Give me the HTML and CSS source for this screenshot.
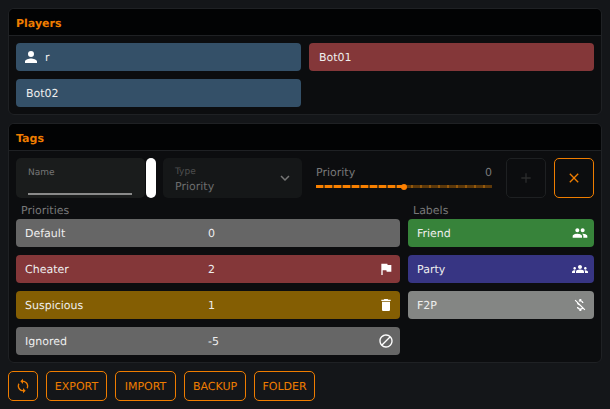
FILE: index.html
```html
<!DOCTYPE html>
<html lang="en">
<head>
<meta charset="utf-8">
<title>Players and Tags</title>
<link rel="stylesheet" href="styles.css">
</head>
<body>
<section class="card players">
  <h2 class="card-title">Players</h2>
  <div class="card-body player-grid">
    <div class="row blue"><svg class="user-icon" viewBox="0 0 24 24"><path d="M12 12a4 4 0 1 0 0-8 4 4 0 0 0 0 8zm0 2c-2.700 0-8 1.340-8 4v2h16v-2c0-2.660-5.300-4-8-4z"/></svg><span class="name-shift">r</span></div>
    <div class="row red">Bot01</div>
    <div class="row blue">Bot02</div>
  </div>
</section>
<section class="card tags">
  <h2 class="card-title">Tags</h2>
  <div class="card-body">
    <div class="controls">
      <div class="name-wrap">
        <div class="name-field"><span class="name-label">Name</span><span class="name-line"></span></div>
        <div class="scroll-pill"></div>
      </div>
      <div class="type-field">
        <div class="type-text"><span class="type-label">Type</span><span class="type-value">Priority</span></div>
        <svg class="chevron" viewBox="0 0 24 24"><path d="M7.410 8.590 12 13.170l4.590-4.580L18 10l-6 6-6-6z"/></svg>
      </div>
      <div class="slider">
        <div class="slider-head"><span>Priority</span><span>0</span></div>
        <div class="track">
          <div class="track-on"></div>
          <div class="track-off"></div>
          <div class="thumb"></div>
        </div>
      </div>
      <div class="square disabled"><svg viewBox="0 0 24 24"><path d="M19 13h-6v6h-2v-6H5v-2h6V5h2v6h6z"/></svg></div>
      <div class="square active"><svg viewBox="0 0 24 24"><path d="M19 6.410 17.590 5 12 10.590 6.410 5 5 6.410 10.590 12 5 17.590 6.410 19 12 13.410 17.590 19 19 17.590 13.410 12z"/></svg></div>
    </div>
    <div class="lists">
      <div class="list">
        <div class="list-title">Priorities</div>
        <div class="row prio gray"><span>Default</span><span>0</span><span></span></div>
        <div class="row prio red"><span>Cheater</span><span>2</span><svg class="icon" viewBox="0 0 24 24"><path d="M14.400 6 14 4H5v17h2v-7h5.600l.4 2h7V6z"/></svg></div>
        <div class="row prio amber"><span>Suspicious</span><span>1</span><svg class="icon" viewBox="0 0 24 24"><path d="M6 19c0 1.100.9 2 2 2h8c1.100 0 2-.9 2-2V7H6v12zM19 4h-3.500l-1-1h-5l-1 1H5v2h14V4z"/></svg></div>
        <div class="row prio gray"><span>Ignored</span><span>-5</span><svg class="icon" viewBox="0 0 24 24"><path d="M12 2C6.480 2 2 6.480 2 12s4.480 10 10 10 10-4.480 10-10S17.520 2 12 2zM4 12c0-4.420 3.580-8 8-8 1.850 0 3.550.63 4.900 1.690L5.690 16.900A7.902 7.902 0 0 1 4 12zm8 8c-1.850 0-3.550-.63-4.900-1.690L18.310 7.100A7.902 7.902 0 0 1 20 12c0 4.420-3.580 8-8 8z"/></svg></div>
      </div>
      <div class="list">
        <div class="list-title">Labels</div>
        <div class="row label green"><span>Friend</span><svg class="icon" viewBox="0 0 24 24"><path d="M16 11c1.660 0 2.990-1.340 2.990-3S17.660 5 16 5s-3 1.340-3 3 1.340 3 3 3zm-8 0c1.660 0 2.990-1.340 2.990-3S9.660 5 8 5 5 6.340 5 8s1.340 3 3 3zm0 2c-2.330 0-7 1.170-7 3.500V19h14v-2.500C15 14.170 10.330 13 8 13zm8 0c-.29 0-.62.020-.97.050 1.160.84 1.970 1.970 1.970 3.450V19h6v-2.500c0-2.330-4.670-3.500-7-3.500z"/></svg></div>
        <div class="row label indigo"><span>Party</span><svg class="icon" viewBox="0 0 24 24"><path d="M12 12.750c1.630 0 3.070.39 4.240.9 1.080.48 1.760 1.560 1.760 2.730V18H6v-1.610c0-1.180.68-2.260 1.760-2.730 1.170-.52 2.610-.91 4.240-.91zM4 13c1.100 0 2-.9 2-2s-.9-2-2-2-2 .9-2 2 .9 2 2 2zm1.130 1.100C4.760 14.040 4.390 14 4 14c-.99 0-1.930.21-2.780.58A2.010 2.010 0 0 0 0 16.430V18h4.500v-1.610c0-.83.23-1.610.63-2.290zM20 13c1.100 0 2-.9 2-2s-.9-2-2-2-2 .9-2 2 .9 2 2 2zm4 3.430c0-.81-.48-1.530-1.220-1.850A6.950 6.950 0 0 0 20 14c-.39 0-.76.040-1.130.1.400.68.630 1.460.63 2.290V18H24v-1.570zM12 6c1.660 0 3 1.340 3 3s-1.340 3-3 3-3-1.340-3-3 1.340-3 3-3z"/></svg></div>
        <div class="row label silver"><span>F2P</span><svg class="icon" viewBox="0 0 24 24"><path d="M12.500 6.900c1.780 0 2.440.85 2.500 2.100h2.210c-.07-1.720-1.120-3.300-3.210-3.810V3h-3v2.160c-.53.120-1.030.3-1.480.54l1.470 1.470c.41-.17.910-.27 1.510-.27zM5.330 4.060 4.060 5.330 7.500 8.770c0 2.080 1.560 3.210 3.910 3.910l3.510 3.510c-.34.480-1.050.91-2.420.91-2.060 0-2.870-.92-2.980-2.100h-2.200c.12 2.190 1.760 3.420 3.680 3.830V21h3v-2.150c.96-.18 1.820-.55 2.450-1.120l2.220 2.220 1.270-1.270L5.330 4.060z"/></svg></div>
      </div>
    </div>
  </div>
</section>
<nav class="actions">
  <button class="action icon-action"><svg viewBox="0 0 24 24"><path d="M12 4V1L8 5l4 4V6c3.310 0 6 2.690 6 6 0 1.010-.25 1.970-.7 2.800l1.460 1.460C19.540 15.030 20 13.570 20 12c0-4.420-3.580-8-8-8zm0 14c-3.310 0-6-2.690-6-6 0-1.010.25-1.970.7-2.800L5.240 7.740C4.460 8.970 4 10.430 4 12c0 4.420 3.580 8 8 8v3l4-4-4-4v3z"/></svg></button>
  <button class="action btn-export">EXPORT</button>
  <button class="action btn-import">IMPORT</button>
  <button class="action btn-backup">BACKUP</button>
  <button class="action btn-folder">FOLDER</button>
</nav>
</body>
</html>
```
FILE: styles.css
```css
* { box-sizing: border-box; }
html, body { margin: 0; height: 100%; }
body {
  padding: 8px;
  background: #141619;
  font-family: "DejaVu Sans", sans-serif;
  font-size: 11px;
  color: #eee;
  overflow: hidden;
  text-rendering: geometricPrecision;
}
.card {
  background: #0c0d0f;
  border: 1px solid #1f2124;
  border-radius: 6px;
  overflow: hidden;
}
.players { height: 107px; }
.tags { height: 240px; margin-top: 8px; }
.card-title {
  margin: 0;
  height: 27px;
  padding: 0 7px;
  background: #020304;
  border-bottom: 1px solid #1f2124;
  color: #ef7d00;
  font-size: 11px;
  font-weight: 700;
  line-height: 30px;
}
.card-body { padding: 7px 7px; }
.player-grid { display: grid; grid-template-columns: 1fr 1fr; gap: 8px; }
.row {
  display: flex;
  align-items: center;
  height: 28px;
  padding: 0 10px;
  border-radius: 4px;
  color: #eee;
}
.blue { background: #345068; }
.red { background: #843739; }
.gray { background: #666; }
.amber { background: #845e03; }
.green { background: #37833a; }
.indigo { background: #373583; }
.silver { background: #848684; }
.user-icon { width: 18px; height: 18px; fill: #fff; margin-left: -4px; margin-right: 5px; }
.name-shift { display: block; }
.controls { display: flex; height: 40px; }
.name-wrap { display: flex; width: 140px; gap: 1px; }
.name-field {
  flex: 1;
  position: relative;
  background: #1a1c1c;
  border-radius: 5px;
  padding: 10px 12px;
}
.name-label { display: block; font-size: 9px; color: #777; line-height: 11px; }
.name-line { position: absolute; left: 12px; right: 13px; bottom: 3px; height: 2px; background: #8a8a8a; }
.scroll-pill { width: 10px; background: #fff; border-radius: 5px; }
.type-field {
  display: flex;
  align-items: center;
  width: 139px;
  margin-left: 7px;
  padding: 0 8px 0 12px;
  background: #151718;
  border-radius: 5px;
}
.type-text { flex: 1; display: flex; flex-direction: column; padding-top: 3px; }
.type-label { font-size: 9px; color: #4e4f4f; line-height: 12px; }
.type-value { color: #6c6d6d; line-height: 15px; margin-top: 1px; }
.chevron { width: 18px; height: 18px; fill: #767676; }
.slider { width: 176px; margin-left: 14px; margin-right: 14px; color: #787878; }
.slider-head { display: flex; justify-content: space-between; padding-top: 8px; line-height: 14px; }
.track { position: relative; height: 3px; margin-top: 5px; }
.track-on {
  position: absolute; left: 0; top: 0; height: 3px; width: 50%;
  background: repeating-linear-gradient(90deg, #f98000 0 7px, #6b3f0a 7px 9px);
}
.track-off {
  position: absolute; right: 0; top: 0; height: 3px; width: 50%;
  background: repeating-linear-gradient(90deg, #5d3809 0 7px, #94580b 7px 9px);
}
.thumb {
  position: absolute; left: 50%; top: 50%;
  width: 6px; height: 6px; margin: -3px 0 0 -3px;
  border-radius: 50%; background: #ff8000;
}
.square {
  flex: none;
  display: flex; align-items: center; justify-content: center;
  width: 40px; height: 40px;
  border-radius: 5px;
}
.square svg { width: 16px; height: 16px; }
.disabled { border: 1px solid #1e2022; }
.disabled svg { fill: #2b2c2d; }
.active { margin-left: 8px; border: 1px solid #ef7d00; }
.active svg { fill: #ef7d00; }
.lists { display: grid; grid-template-columns: 384px 186px; gap: 8px; margin-top: 6px; }
.list { display: flex; flex-direction: column; gap: 8px; }
.list-title { height: 13px; padding-left: 5px; margin-bottom: -6px; color: #787878; line-height: 13px; }
.prio { display: grid; grid-template-columns: 183px 1fr 16px; padding: 0 6px 0 9px; }
.label { justify-content: space-between; padding: 0 6px 0 9px; }
.icon { width: 16px; height: 16px; fill: #fff; display: block; }
.actions { display: flex; gap: 8px; margin-top: 8px; }
.action {
  height: 30px;
  padding: 0;
  background: transparent;
  border: 1px solid #ef7d00;
  border-radius: 5px;
  color: #ef7d00;
  font: 11px "DejaVu Sans", sans-serif;
  text-rendering: geometricPrecision;
}
.icon-action { width: 30px; display: flex; align-items: center; justify-content: center; }
.icon-action svg { width: 16px; height: 16px; fill: #ef7d00; }
.btn-export, .btn-import { width: 61px; }
.btn-backup { width: 62px; }
.btn-folder { width: 61px; }
```
